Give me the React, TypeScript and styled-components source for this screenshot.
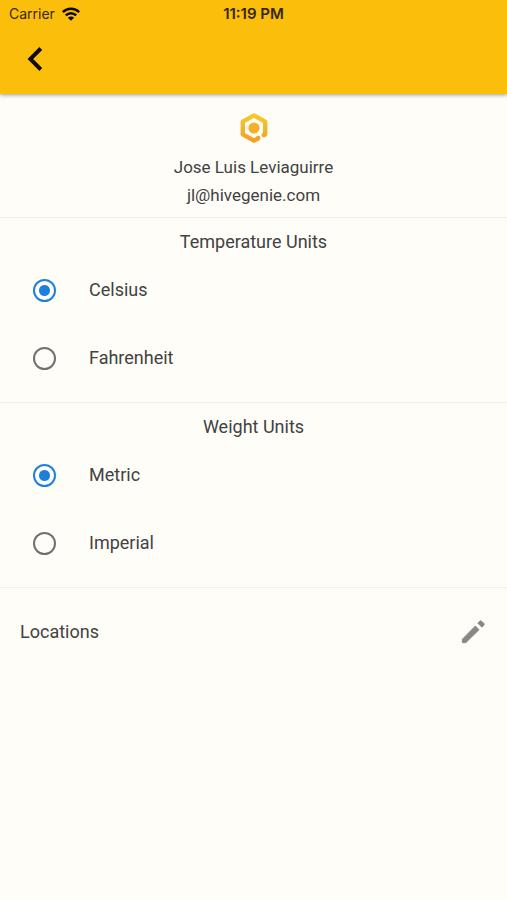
import React, { useState } from "react";
import styled, { createGlobalStyle } from "styled-components";

const GlobalStyle = createGlobalStyle`
  *, *::before, *::after { box-sizing: border-box; }
  body {
    margin: 0;
    background: #fefdf8;
    color: #424242;
    font-family: Roboto, "Liberation Sans", sans-serif;
    font-size: 18px;
    line-height: 28px;
  }
`;

const Page = styled.div`
  min-height: 100vh;
  background: #fefdf8;
`;

const Header = styled.header`
  background: #fbbe0b;
  box-shadow: 0 1px 4px rgba(0, 0, 0, 0.4);
`;

const StatusBar = styled.div`
  display: grid;
  grid-template-columns: 1fr auto 1fr;
  align-items: center;
  height: 28px;
  padding: 0 9px;
  color: #33280a;
  font-family: Inter, "Liberation Sans", sans-serif;
  font-size: 14px;
`;

const Carrier = styled.span`
  display: flex;
  align-items: center;
  gap: 7px;
`;

const Clock = styled.time`
  font-size: 15px;
  font-weight: 600;
`;

const Toolbar = styled.div`
  display: flex;
  align-items: center;
  height: 66px;
  padding: 0 15px 4px;
`;

const IconButton = styled.button`
  display: flex;
  align-items: center;
  justify-content: center;
  width: 40px;
  height: 40px;
  padding: 0;
  border: 0;
  background: none;
  color: inherit;
  cursor: pointer;
`;

const Profile = styled.section`
  display: flex;
  flex-direction: column;
  align-items: center;
  padding: 19px 16px 8px;
  font-size: 17px;
`;

const Logo = styled.svg`
  width: 30px;
  height: 30px;
  margin-bottom: 10px;
`;

const ProfileLine = styled.p`
  margin: 0;
`;

const Group = styled.fieldset`
  min-width: 0;
  margin: 0;
  padding: 10px 0;
  border: 0;
  border-top: 1px solid #f1f0ed;
`;

const GroupTitle = styled.legend`
  float: left;
  width: 100%;
  padding: 0;
  text-align: center;
`;

const Option = styled.label`
  clear: both;
  display: flex;
  align-items: center;
  gap: 33px;
  height: 68px;
  padding: 0 33px;
  cursor: pointer;
`;

const Radio = styled.input`
  appearance: none;
  width: 23px;
  height: 23px;
  margin: 0;
  border: 2px solid #707070;
  border-radius: 50%;
  cursor: pointer;

  &:checked {
    border-color: #1e80dc;
    background: radial-gradient(circle, #1e80dc 5px, transparent 6px);
  }
`;

const Locations = styled.section`
  display: flex;
  align-items: center;
  justify-content: space-between;
  height: 89px;
  padding: 0 14px 0 20px;
  border-top: 1px solid #f1f0ed;
`;

const EditButton = styled(IconButton)`
  color: #888;
`;

function WifiIcon() {
  return (
    <svg width="18" height="14" viewBox="0 0 18 14" aria-hidden="true">
      <g fill="none" stroke="#0c0900" strokeWidth="2.5">
        <path d="M.8 5.1a11.6 11.6 0 0 1 16.4 0" />
        <path d="M3.8 8.4a7.3 7.3 0 0 1 10.4 0" />
      </g>
      <path d="M9 13.8 5.9 10.7a4.4 4.4 0 0 1 6.2 0z" fill="#0c0900" />
    </svg>
  );
}

function BackIcon() {
  return (
    <svg width="16" height="26" viewBox="0 0 16 26" aria-hidden="true">
      <path d="M13.8 2.5 3.3 13l10.5 10.5" fill="none" stroke="#100c00" strokeWidth="3.9" />
    </svg>
  );
}

function PencilIcon() {
  return (
    <svg width="30" height="30" viewBox="0 0 24 24" fill="currentColor" aria-hidden="true">
      <path
        d="M3.5 17.8v2.7h2.7L16.8 10.1l-2.9-2.9L3.5 17.8zM20.7 6.5a1 1 0 0 0 0-1.3l-1.9-1.9a1 1 0 0 0-1.3 0l-1.6 1.6 3.2 3.2 1.6-1.6z"
        stroke="currentColor"
        strokeWidth=".8"
        strokeLinejoin="round"
      />
    </svg>
  );
}

function HiveLogo() {
  return (
    <Logo viewBox="0 0 30 30" role="img" aria-label="HiveGenie">
      <defs>
        <linearGradient id="honey" gradientUnits="userSpaceOnUse" x1="0" y1="0" x2="0" y2="30">
          <stop offset="0" stopColor="#f5cf2c" />
          <stop offset="1" stopColor="#f39c25" />
        </linearGradient>
      </defs>
      <path
        d="M19.5 25.2 15 27.6 3.8 21.3V8.7L15 2.4l11.2 6.3v12.6l-1.4.8"
        fill="none"
        stroke="url(#honey)"
        strokeWidth="4.4"
        strokeLinejoin="round"
      />
      <circle cx="19.2" cy="25" r="2.3" fill="url(#honey)" />
      <circle cx="24.8" cy="22" r="2.3" fill="url(#honey)" />
      <circle cx="15" cy="15" r="5.6" fill="#f6b023" />
    </Logo>
  );
}

interface UnitGroupProps {
  title: string;
  name: string;
  options: string[];
}

function UnitGroup({ title, name, options }: UnitGroupProps) {
  const [selected, setSelected] = useState(options[0]);
  return (
    <Group>
      <GroupTitle>{title}</GroupTitle>
      {options.map((option) => (
        <Option key={option}>
          <Radio
            type="radio"
            name={name}
            value={option}
            checked={selected === option}
            onChange={() => setSelected(option)}
          />
          {option}
        </Option>
      ))}
    </Group>
  );
}

export default function App() {
  return (
    <Page>
      <GlobalStyle />
      <Header>
        <StatusBar>
          <Carrier>
            Carrier
            <WifiIcon />
          </Carrier>
          <Clock>11:19 PM</Clock>
        </StatusBar>
        <Toolbar>
          <IconButton type="button" aria-label="Back">
            <BackIcon />
          </IconButton>
        </Toolbar>
      </Header>
      <main>
        <Profile>
          <HiveLogo />
          <ProfileLine>Jose Luis Leviaguirre</ProfileLine>
          <ProfileLine>jl@hivegenie.com</ProfileLine>
        </Profile>
        <UnitGroup title="Temperature Units" name="temperature" options={["Celsius", "Fahrenheit"]} />
        <UnitGroup title="Weight Units" name="weight" options={["Metric", "Imperial"]} />
        <Locations>
          <span>Locations</span>
          <EditButton type="button" aria-label="Edit locations">
            <PencilIcon />
          </EditButton>
        </Locations>
      </main>
    </Page>
  );
}
